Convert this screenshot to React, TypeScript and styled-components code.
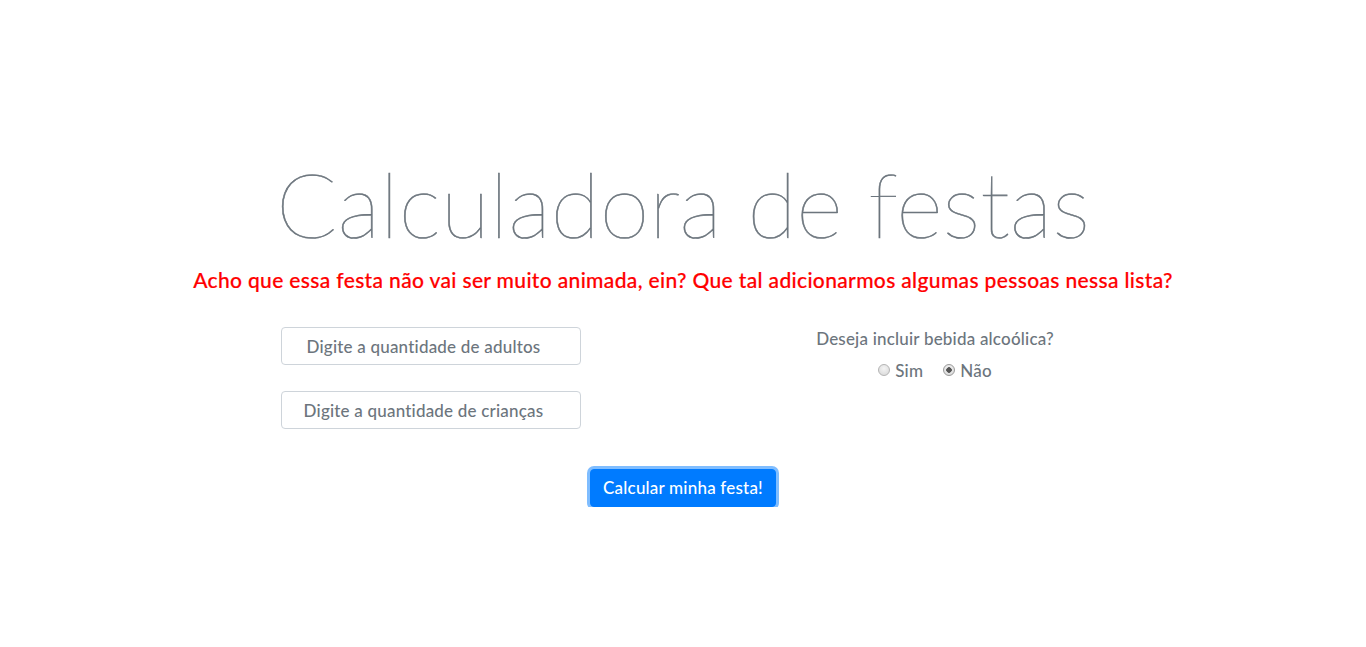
import { useState } from "react";
import styled, { createGlobalStyle } from "styled-components";

const GlobalStyle = createGlobalStyle`
    html, body {
        margin: 0;
        padding: 0;
        background: #ffffff;
    }
    body {
        font-family: "Lato", "Noto Sans", sans-serif;
        color: #6c757d;
    }
`;

const Page = styled.main`
    display: flex;
    flex-direction: column;
    align-items: center;
    padding-top: 149px;
`;

const Title = styled.h1`
    margin: 0;
    font-family: "Lato", sans-serif;
    font-weight: 100;
    font-size: 90px;
    line-height: 1.2;
    color: #6c757d;
    letter-spacing: 0;
    -webkit-text-stroke: 0.6px #6c757d;
`;

const Warning = styled.h5`
    margin: 10px 0 0;
    font-size: 21px;
    font-weight: 500;
    line-height: 1.2;
    color: #ff0000;
    letter-spacing: 0.35px;
    -webkit-text-stroke: 0.2px #ff0000;
`;

const Form = styled.form`
    display: flex;
    flex-direction: column;
    align-items: center;
    margin-top: 35px;
`;

const Columns = styled.div`
    display: grid;
    grid-template-columns: 504px 504px;
    width: 1008px;
`;

const Column = styled.div`
    display: flex;
    flex-direction: column;
    align-items: center;
    gap: 26px;
`;

const Input = styled.input`
    box-sizing: border-box;
    width: 300px;
    height: 38px;
    padding: 6px 12px;
    border: 1px solid #ced4da;
    border-radius: 4px;
    font-family: inherit;
    font-size: 17px;
    font-weight: 500;
    letter-spacing: 0.2px;
    text-align: center;
    color: #495057;
    outline: none;

    &::placeholder {
        color: #6c757d;
        opacity: 1;
    }
`;

const Question = styled.p`
    margin: 0;
    font-size: 17px;
    font-weight: 500;
    letter-spacing: 0.2px;
    line-height: 24px;
    color: #6c757d;
`;

const Options = styled.div`
    display: flex;
    gap: 20px;
    margin-top: -17px;
`;

const Option = styled.label`
    display: flex;
    align-items: center;
    gap: 5px;
    font-size: 17px;
    font-weight: 500;
    letter-spacing: 0.2px;
    color: #6c757d;
    cursor: pointer;
`;

const Radio = styled.input.attrs({ type: "radio" })`
    appearance: none;
    box-sizing: border-box;
    width: 12px;
    height: 12px;
    margin: 0;
    border: 1px solid #b4b4b4;
    border-radius: 50%;
    background: radial-gradient(circle at 50% 35%, #f4f4f4, #d6d6d6);
    position: relative;
    top: -1px;
    cursor: pointer;

    &:checked {
        background:
            radial-gradient(circle, #555 0 2.5px, transparent 3px),
            radial-gradient(circle at 50% 35%, #f4f4f4, #d6d6d6);
        border-color: #9a9a9a;
    }
`;

const Submit = styled.button`
    margin-top: 40px;
    padding: 6px 12px;
    border: 1px solid #007bff;
    border-radius: 4px;
    background: #007bff;
    color: #ffffff;
    font-family: inherit;
    font-size: 17px;
    font-weight: 500;
    letter-spacing: 0.2px;
    line-height: 24px;
    box-shadow: 0 0 0 3px rgba(0, 123, 255, 0.5);
    cursor: pointer;
`;

export default function App() {
    const [alcohol, setAlcohol] = useState("nao");

    return (
        <>
            <GlobalStyle />
            <Page>
                <Title>Calculadora de festas</Title>
                <Warning>
                    Acho que essa festa não vai ser muito animada, ein? Que tal adicionarmos algumas pessoas nessa lista?
                </Warning>
                <Form onSubmit={(e) => e.preventDefault()}>
                    <Columns>
                        <Column>
                            <Input type="number" placeholder="Digite a quantidade de adultos" />
                            <Input type="number" placeholder="Digite a quantidade de crianças" />
                        </Column>
                        <Column>
                            <Question>Deseja incluir bebida alcoólica?</Question>
                            <Options>
                                <Option>
                                    <Radio
                                        name="alcohol"
                                        checked={alcohol === "sim"}
                                        onChange={() => setAlcohol("sim")}
                                    />
                                    Sim
                                </Option>
                                <Option>
                                    <Radio
                                        name="alcohol"
                                        checked={alcohol === "nao"}
                                        onChange={() => setAlcohol("nao")}
                                    />
                                    Não
                                </Option>
                            </Options>
                        </Column>
                    </Columns>
                    <Submit type="submit">Calcular minha festa!</Submit>
                </Form>
            </Page>
        </>
    );
}
